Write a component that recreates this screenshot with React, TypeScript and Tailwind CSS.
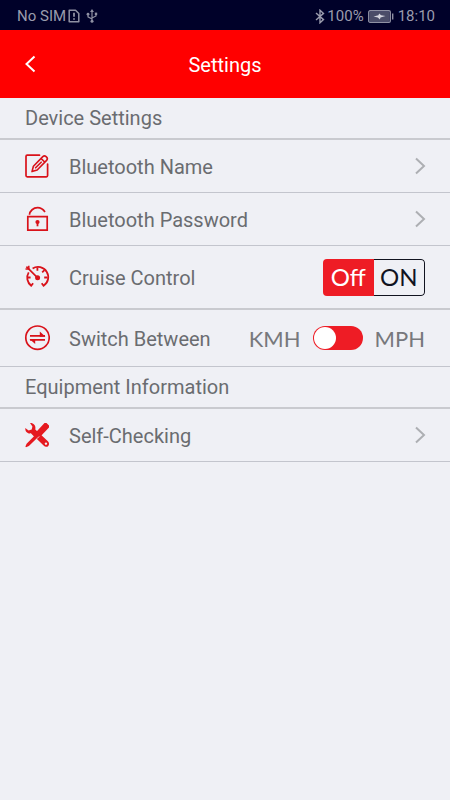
import { useState } from "react";
import type { ReactNode } from "react";

const RED = "#d9121a";

function SimAlertIcon() {
  return (
    <svg width="12" height="14" viewBox="0 0 12 14" fill="none" stroke="#8f91a3" strokeWidth="1.5" aria-hidden="true">
      <path d="M1.2 1.2h6.3l3.3 3.3v8.3H1.2z" strokeLinejoin="round" />
      <path d="M6 3.8v4M6 9.2v1.6" strokeWidth="1.8" />
    </svg>
  );
}

function UsbIcon() {
  return (
    <svg width="12" height="14" viewBox="0 0 12 14" fill="none" stroke="#8f91a3" strokeWidth="1.2" aria-hidden="true">
      <path d="M6 2v10M6 10L2 7.8V5.5M6 9l4-2V4.8" />
      <path d="M6 0L4 3h4z" fill="#8f91a3" stroke="none" />
      <circle cx="6" cy="12.3" r="1.5" fill="#8f91a3" stroke="none" />
      <circle cx="2" cy="5.2" r="1.4" fill="#8f91a3" stroke="none" />
      <path d="M8.8 3.6h2.4V6H8.8z" fill="#8f91a3" stroke="none" />
    </svg>
  );
}

function BluetoothIcon() {
  return (
    <svg width="10" height="15" viewBox="0 0 10 15" fill="none" stroke="#9a9cad" strokeWidth="1.4" aria-hidden="true">
      <path d="M1 4l7.5 6.6L5 13.8V1.2l3.5 3.2L1 11" />
    </svg>
  );
}

function BatteryIcon() {
  return (
    <svg width="26" height="13" viewBox="0 0 26 13" aria-hidden="true">
      <rect x="0.6" y="0.6" width="21.8" height="11.8" rx="1.5" fill="#34365a" stroke="#8f91a3" strokeWidth="1.1" />
      <rect x="2" y="2" width="19" height="9" fill="#4b4d68" />
      <path d="M5.5 6.5l5-1.2.6-1.9 2 1.9 4.4.8-5 1.4-.7 1.9-1.9-2z" fill="#d5d6df" />
      <path d="M24 3.5h1.4v6H24z" fill="#8f91a3" />
    </svg>
  );
}

function EditIcon() {
  return (
    <svg width="26" height="26" viewBox="0 0 26 26" fill="none" stroke={RED} strokeWidth="1.7" strokeLinecap="round" strokeLinejoin="round" aria-hidden="true">
      <path d="M15.5 2.2H3.2a1.2 1.2 0 0 0-1.2 1.2v19.2a1.2 1.2 0 0 0 1.2 1.2h19.2a1.2 1.2 0 0 0 1.2-1.2V11" />
      <path d="M8 18.6l1.4-5.4L18.8 3.600a2.400 2.400 0 0 1 3.300 0l.5.5a2.400 2.400 0 0 1 0 3.300l-9.400 9.600zM17 5.400l3.900 3.800M11.600 14.800l5.600-5.600" strokeWidth="1.600" />
    </svg>
  );
}

function LockIcon() {
  return (
    <svg width="26" height="26" viewBox="0 0 26 26" fill="none" stroke={RED} strokeWidth="1.700" aria-hidden="true">
      <path d="M3.800 10.700h19.400v13.500H3.800z" />
      <path d="M5.500 8.700C5.800 4.800 9.400 1.700 13.600 1.700c2.800 0 5.400 1.400 7.400 4.200" />
      <circle cx="13.500" cy="16" r="2.100" fill={RED} stroke="none" />
      <path d="M13.500 16v4.300" strokeWidth="1.800" />
    </svg>
  );
}

function CruiseIcon() {
  return (
    <svg width="26" height="26" viewBox="0 0 26 26" fill="none" stroke={RED} strokeWidth="1.800" aria-hidden="true">
      <path d="M8.600 4.600A10.100 10.100 0 0 1 19.600 21.700l-1.900-2.500M4.700 8.400A10.100 10.100 0 0 0 7.200 21.700l1.900-2.500" />
      <path d="M13.400 3.400v3.400M20.400 6.200l-2.200 2.200M23.400 13.500h-3.200M3.400 13.500h3.200" />
      <path d="M2.400 2.600l10.500 10.500" strokeWidth="1.700" />
      <path d="M1.500 5h3.300V1.700" strokeWidth="1.500" />
      <circle cx="13.600" cy="13.800" r="2.500" fill={RED} stroke="none" />
    </svg>
  );
}

function SwapIcon() {
  return (
    <svg width="26" height="26" viewBox="0 0 26 26" fill="none" stroke={RED} strokeWidth="1.700" aria-hidden="true">
      <circle cx="13.500" cy="12.700" r="11.700" />
      <path d="M6 10.800h15M21 14.900H6" strokeWidth="1.800" />
      <path d="M21.500 11.700L15.800 6.600v5.100zM5.500 14l5.700 5.100V14z" fill={RED} stroke="none" />
    </svg>
  );
}

function ToolsIcon() {
  return (
    <svg width="26" height="26" viewBox="0 0 26 26" fill="#e5191f" aria-hidden="true">
      <path d="M20.500 1.100h2l2.500 2.500v1.900l-8.300 8.700-2.300.500L4.900 24 2 25.200l-.600-.600L2.600 21.700 12 12.200l.400-2.500z" />
      <path d="M6 .900C9.300.600 11.900 3.200 11.400 6.500l-.1.900 3.200 3.100-4.200 4.300-3.400-3.500C3.600 12 1 9.500 1.300 5.900L4.600 8.400 7.700 7.500 8.400 4.400z" />
      <path d="M12.900 17l4.300-4.100 6.700 6.400c1.500 1.500 1.500 3.400.4 4.600s-3.200 1.300-4.700-.3zm8.200 3.800a1.200 1.200 0 1 0 1.700 1.700 1.200 1.200 0 0 0-1.700-1.700z" fillRule="evenodd" />
    </svg>
  );
}

function Chevron() {
  return (
    <svg width="12" height="18" viewBox="0 0 12 18" fill="none" stroke="#adafb3" strokeWidth="2" aria-hidden="true">
      <path d="M2 1.500L10 9l-8 7.500" />
    </svg>
  );
}

function SectionTitle({ children }: { children: ReactNode }) {
  return (
    <h2 className="border-b-2 border-[#c9cacf] px-[25px] pt-2 pb-2 text-xl leading-6">{children}</h2>
  );
}

function LinkRow({ icon, label }: { icon: ReactNode; label: string }) {
  return (
    <li className="border-b border-[#c3c5cd]">
      <a href="#" className="flex h-[52px] items-center px-6">
        {icon}
        <span className="ml-[19px] flex-1 pt-0.5">{label}</span>
        <Chevron />
      </a>
    </li>
  );
}

export default function App() {
  const [cruise, setCruise] = useState(false);
  const [mph, setMph] = useState(false);
  const segment = "h-full flex-1 border-[#11131f] text-center";

  return (
    <div className="min-h-screen bg-[#eff0f5] font-['Roboto','Noto_Sans',sans-serif] text-xl text-[#6a6c70]">
      <div className="flex h-[30px] items-center justify-between bg-[#000129] pt-0.5 pr-[15px] pl-[17px] text-[15px] text-[#9a9cad]">
        <div className="flex items-center">
          <span>No SIM</span>
          <span className="ml-0.5"><SimAlertIcon /></span>
          <span className="ml-1.5"><UsbIcon /></span>
        </div>
        <div className="flex items-center">
          <BluetoothIcon />
          <span className="ml-0.5">100%</span>
          <span className="mx-1"><BatteryIcon /></span>
          <span>18:10</span>
        </div>
      </div>

      <header className="grid h-[68px] grid-cols-[48px_1fr_48px] items-center bg-[#ff0000] text-white">
        <button type="button" aria-label="Back" className="flex h-12 items-center pl-6">
          <svg width="12" height="18" viewBox="0 0 12 18" fill="none" stroke="currentColor" strokeWidth="2" aria-hidden="true">
            <path d="M10.500 1.500L2.500 9l8 7.500" />
          </svg>
        </button>
        <h1 className="pt-0.5 text-center text-xl">Settings</h1>
      </header>

      <main>
        <section>
          <SectionTitle>Device Settings</SectionTitle>
          <ul>
            <LinkRow icon={<EditIcon />} label="Bluetooth Name" />
            <LinkRow icon={<LockIcon />} label="Bluetooth Password" />
            <li className="flex h-16 items-center border-b-2 border-[#c9cacf] pr-[25px] pl-6">
              <CruiseIcon />
              <span className="ml-[19px] flex-1 pt-0.5" id="cruise-label">Cruise Control</span>
              <div role="group" aria-labelledby="cruise-label" className="flex h-[37px] w-[102px] overflow-hidden rounded-sm font-['Lato',sans-serif] text-2xl">
                <button type="button" aria-pressed={!cruise} onClick={() => setCruise(false)} className={`${segment} ${cruise ? "rounded-l-sm border-y border-l text-[#11131f]" : "bg-[#ee1c25] text-white"}`}>
                  Off
                </button>
                <button type="button" aria-pressed={cruise} onClick={() => setCruise(true)} className={`${segment} ${cruise ? "bg-[#ee1c25] text-white" : "rounded-r-sm border-y border-r text-[#11131f]"}`}>
                  ON
                </button>
              </div>
            </li>
            <li className="flex h-[57px] items-center border-b border-[#c3c5cd] pr-[25px] pl-6">
              <SwapIcon />
              <span className="ml-[19px] flex-1 pt-0.5">Switch Between</span>
              <label className="flex items-center gap-3 font-['Lato',sans-serif] text-[22px] text-[#77787c]">
                <span className="pt-0.5">KMH</span>
                <input type="checkbox" role="switch" checked={mph} onChange={(e) => setMph(e.target.checked)} className="peer sr-only" />
                <span className="flex h-6 w-[50px] items-center rounded-full bg-[#ee1c25] px-px peer-checked:justify-end">
                  <span className="size-[22px] rounded-full bg-white" />
                </span>
                <span className="pt-0.5">MPH</span>
              </label>
            </li>
          </ul>
        </section>
        <section>
          <SectionTitle>Equipment Information</SectionTitle>
          <ul>
            <LinkRow icon={<ToolsIcon />} label="Self-Checking" />
          </ul>
        </section>
      </main>
    </div>
  );
}
